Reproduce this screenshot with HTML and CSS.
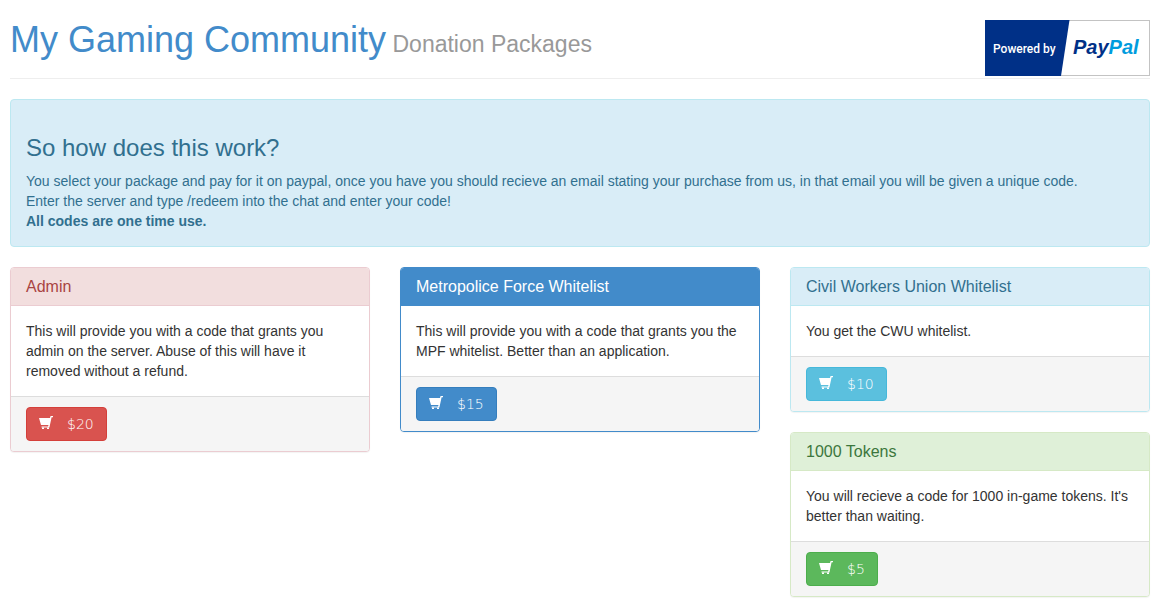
FILE: index.html
```html
<!DOCTYPE html>
<html lang="en">
<head>
    <meta charset="UTF-8">
    <meta name="viewport" content="width=device-width, initial-scale=1">
    <title>My Gaming Community - Donation Packages</title>
    <link rel="stylesheet" href="styles.css">
</head>
<body>
    <!-- shared cart icon -->
    <svg class="sprite" aria-hidden="true">
        <symbol id="cart" viewBox="0 0 14 14">
            <path d="M0 2h11l0.600-2h2.400v1.200h-1.400l-2.200 10.300h-7.900v-1h6.500l0.500-1.500h-7.500z"/>
            <path d="M3 11.500h2v1.500h-2zM8 11.500h2v1.500h-2z"/>
        </symbol>
    </svg>

    <div class="container">
        <div class="page-header">
            <h1><a href="#">My Gaming Community</a><small> Donation Packages</small></h1>
            <svg class="paypal" width="165" height="56" viewBox="0 0 165 56" role="img" aria-label="Powered by PayPal">
                <rect x="0.5" y="0.5" width="164" height="55" fill="#fff" stroke="#c3c3c3"/>
                <path d="M0 0h84.500l-8.500 56h-76z" fill="#003087"/>
                <text class="powered" x="8" y="33">Powered by</text>
                <text class="brand" x="88" y="34">Pay<tspan class="pal">Pal</tspan></text>
            </svg>
        </div>

        <div class="alert">
            <h3>So how does this work?</h3>
            You select your package and pay for it on paypal, once you have you should recieve an email stating your purchase from us, in that email you will be given a unique code.<br>
            Enter the server and type /redeem into the chat and enter your code!<br>
            <strong>All codes are one time use.</strong>
        </div>

        <div class="row">
            <div class="col">
                <div class="panel danger">
                    <div class="panel-heading"><h3>Admin</h3></div>
                    <div class="panel-body">This will provide you with a code that grants you admin on the server. Abuse of this will have it removed without a refund.</div>
                    <div class="panel-footer">
                        <button type="button" class="btn"><svg class="icon"><use href="#cart"/></svg>$20</button>
                    </div>
                </div>
            </div>
            <div class="col">
                <div class="panel primary">
                    <div class="panel-heading"><h3>Metropolice Force Whitelist</h3></div>
                    <div class="panel-body">This will provide you with a code that grants you the MPF whitelist. Better than an application.</div>
                    <div class="panel-footer">
                        <button type="button" class="btn"><svg class="icon"><use href="#cart"/></svg>$15</button>
                    </div>
                </div>
            </div>
            <div class="col">
                <div class="panel info">
                    <div class="panel-heading"><h3>Civil Workers Union Whitelist</h3></div>
                    <div class="panel-body">You get the CWU whitelist.</div>
                    <div class="panel-footer">
                        <button type="button" class="btn"><svg class="icon"><use href="#cart"/></svg>$10</button>
                    </div>
                </div>
                <div class="panel success">
                    <div class="panel-heading"><h3>1000 Tokens</h3></div>
                    <div class="panel-body">You will recieve a code for 1000 in-game tokens. It's better than waiting.</div>
                    <div class="panel-footer">
                        <button type="button" class="btn"><svg class="icon"><use href="#cart"/></svg>$5</button>
                    </div>
                </div>
            </div>
        </div>
    </div>
</body>
</html>
```
FILE: styles.css
```css
* {
    box-sizing: border-box;
}
body {
    margin: 0;
    background-color: #fff;
    color: #333;
    font-family: "Liberation Sans", Arial, sans-serif;
    font-size: 14px;
    line-height: 20px;
}
h1, h3 {
    margin: 0;
    font-weight: normal;
}
a {
    color: #428bca;
    text-decoration: none;
}
.sprite {
    display: none;
}
.container {
    padding: 20px 10px 0;
}
.page-header {
    display: flex;
    justify-content: space-between;
    align-items: flex-start;
    height: 59px;
    margin-bottom: 20px;
    border-bottom: 1px solid #eee;
}
.page-header h1 {
    font-size: 36px;
    line-height: 39px;
}
.page-header small {
    color: #999;
    font-size: 23px;
    line-height: 24px;
}
.paypal {
    flex: none;
}
.powered {
    fill: #fff;
    font: 500 12px Roboto, sans-serif;
}
.brand {
    fill: #003087;
    font: italic bold 20px "Liberation Sans", Arial, sans-serif;
}
.pal {
    fill: #009cde;
}
.alert {
    margin-bottom: 20px;
    padding: 15px;
    border: 1px solid #bce8f1;
    border-radius: 4px;
    background-color: #d9edf7;
    color: #31708f;
}
.alert h3 {
    margin: 20px 0 10px;
    font-size: 24px;
    line-height: 26px;
}
.row {
    display: grid;
    grid-template-columns: repeat(3, 1fr);
    gap: 30px;
    align-items: start;
}
.panel {
    margin-bottom: 20px;
    border: 1px solid #ddd;
    border-radius: 4px;
    background-color: #fff;
    box-shadow: 0 1px 1px rgba(0, 0, 0, 0.05);
}
.panel-heading {
    padding: 10px 15px;
    border-bottom: 1px solid transparent;
    border-radius: 3px 3px 0 0;
}
.panel-heading h3 {
    font-size: 16px;
    line-height: 17px;
}
.panel-body {
    padding: 15px;
}
.panel-footer {
    padding: 10px 15px;
    border-top: 1px solid #ddd;
    border-radius: 0 0 3px 3px;
    background-color: #f5f5f5;
}
.btn {
    display: flex;
    align-items: center;
    gap: 14px;
    height: 34px;
    padding: 0 12px;
    border: 1px solid transparent;
    border-radius: 4px;
    color: #fff;
    font-family: "DejaVu Sans", sans-serif;
    font-size: 14px;
    font-weight: 200;
    line-height: 20px;
    cursor: pointer;
}
.icon {
    width: 14px;
    height: 14px;
    margin-bottom: 2px;
    fill: #fff;
}

/* panel colours */
.danger {
    border-color: #ebccd1;
}
.danger .panel-heading {
    border-color: #ebccd1;
    background-color: #f2dede;
    color: #a94442;
}
.danger .btn {
    border-color: #d43f3a;
    background-color: #d9534f;
}
.primary {
    border-color: #428bca;
}
.primary .panel-heading {
    border-color: #428bca;
    background-color: #428bca;
    color: #fff;
}
.primary .btn {
    border-color: #357ebd;
    background-color: #428bca;
}
.info {
    border-color: #bce8f1;
}
.info .panel-heading {
    border-color: #bce8f1;
    background-color: #d9edf7;
    color: #31708f;
}
.info .btn {
    border-color: #46b8da;
    background-color: #5bc0de;
}
.success {
    border-color: #d6e9c6;
}
.success .panel-heading {
    border-color: #d6e9c6;
    background-color: #dff0d8;
    color: #3c763d;
}
.success .btn {
    border-color: #4cae4c;
    background-color: #5cb85c;
}
```
